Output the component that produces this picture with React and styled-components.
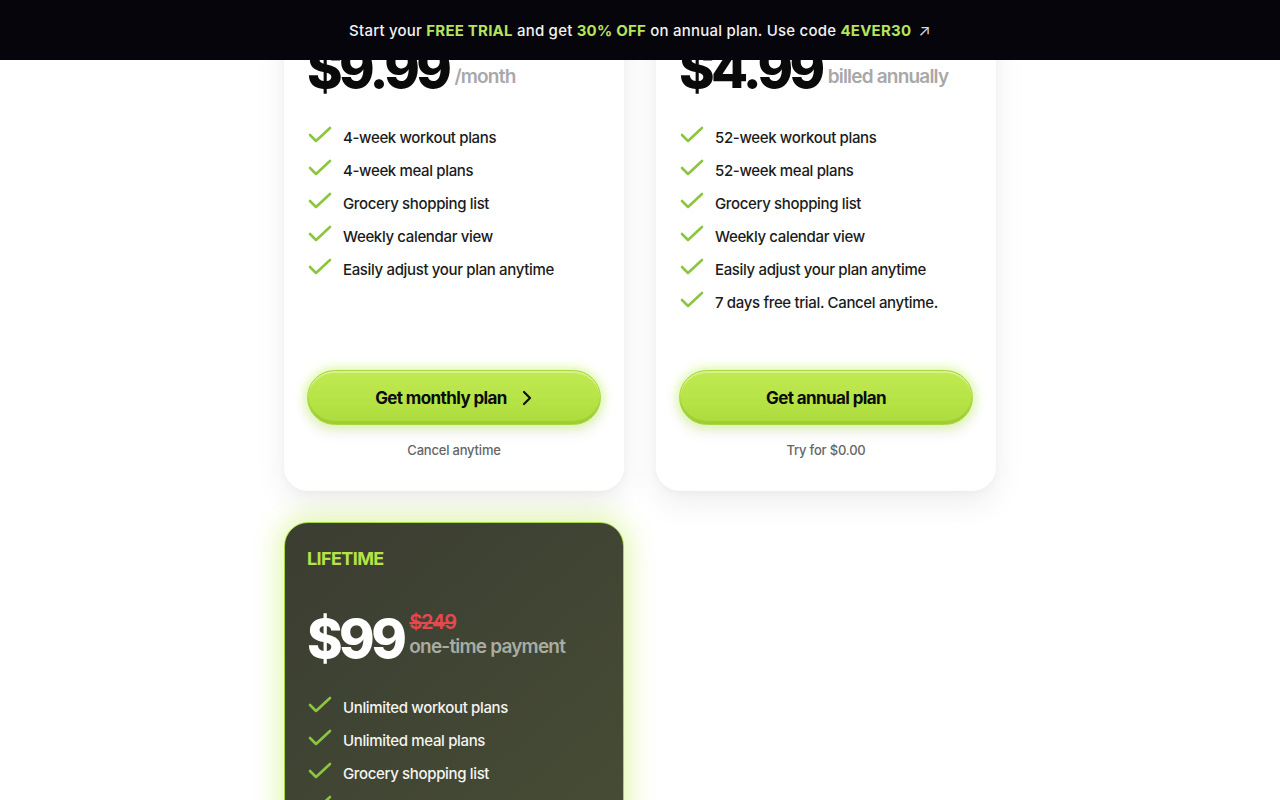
import styled, { createGlobalStyle } from "styled-components"

const GlobalStyle = createGlobalStyle`
  body {
    margin: 0;
    background: #ffffff;
    font-family: "Inter", "Noto Sans", sans-serif;
    color: #111;
  }
`

const plans = [
  {
    label: "MONTHLY",
    price: "$9.99",
    unit: "/month",
    features: ["4-week workout plans", "4-week meal plans", "Grocery shopping list", "Weekly calendar view", "Easily adjust your plan anytime"],
    cta: "Get monthly plan",
    arrow: true,
    note: "Cancel anytime",
  },
  {
    label: "ANNUAL",
    price: "$4.99",
    unit: "billed annually",
    features: ["52-week workout plans", "52-week meal plans", "Grocery shopping list", "Weekly calendar view", "Easily adjust your plan anytime", "7 days free trial. Cancel anytime."],
    cta: "Get annual plan",
    note: "Try for $0.00",
  },
  {
    label: "LIFETIME",
    price: "$99",
    old: "$249",
    unit: "one-time payment",
    dark: true,
    features: ["Unlimited workout plans", "Unlimited meal plans", "Grocery shopping list", "Weekly calendar view", "Easily adjust your plan anytime", "Lifetime access. Pay once."],
    cta: "Get lifetime plan",
    note: "One-time payment",
  },
]

const Check = () => (
  <svg width="26" height="18" viewBox="0 0 26 18" fill="none">
    <polyline points="3,9 9,15 23,2" stroke="#8cc63f" strokeWidth="2.6" strokeLinecap="round" strokeLinejoin="round" />
  </svg>
)

const Chevron = () => (
  <svg width="12" height="16" viewBox="0 0 12 16" fill="none">
    <polyline points="3,2 9,8 3,14" stroke="#111" strokeWidth="2.2" strokeLinecap="round" strokeLinejoin="round" />
  </svg>
)

const App = () => {
  return (
    <>
      <GlobalStyle />
      <Banner>
        Start your <Hi>FREE TRIAL</Hi> and get <Hi>30% OFF</Hi> on annual plan. Use code <Hi>4EVER30</Hi>
        <Arrow>↗</Arrow>
      </Banner>
      <Page>
        <Grid>
          {plans.map((p) => (
            <Card key={p.label} $dark={p.dark}>
              <Label $dark={p.dark}>{p.label}</Label>
              <PriceRow>
                <Amount $dark={p.dark}>{p.price}</Amount>
                <Side>
                  {p.old && <Old>{p.old}</Old>}
                  <Unit $dark={p.dark}>{p.unit}</Unit>
                </Side>
              </PriceRow>
              <Features>
                {p.features.map((f) => (
                  <Feature key={f} $dark={p.dark}>
                    <Check />
                    <span>{f}</span>
                  </Feature>
                ))}
              </Features>
              <Cta>
                <Button>
                  {p.cta}
                  {p.arrow && <Chevron />}
                </Button>
                <Note $dark={p.dark}>{p.note}</Note>
              </Cta>
            </Card>
          ))}
        </Grid>
      </Page>
    </>
  )
}

const Banner = styled.div`
  position: fixed;
  top: 0;
  left: 0;
  right: 0;
  height: 60px;
  z-index: 10;
  background: #05050b;
  color: #f2f2f2;
  display: flex;
  align-items: center;
  justify-content: center;
  font-size: 15px;
  font-weight: 500;
  letter-spacing: 0.22px;
  white-space: pre;
`
const Hi = styled.span`
  color: #b8e35a;
  font-weight: 700;
`
const Arrow = styled.span`
  color: #d8d8d8;
  font-weight: 400;
  font-size: 16px;
  margin-left: 7px;
`
const Page = styled.main`
  margin-top: -48px;
  padding-bottom: 60px;
`
const Grid = styled.div`
  width: 712px;
  margin: 0 auto;
  display: grid;
  grid-template-columns: 1fr 1fr;
  gap: 31px 32px;
`
const Card = styled.div`
  display: flex;
  flex-direction: column;
  padding: 24px 22px 30px;
  border-radius: 24px;
  background: ${(p) => (p.$dark ? "linear-gradient(140deg, #3a3d31 0%, #454a35 60%, #4a5135 100%)" : "#fff")};
  border: 1px solid ${(p) => (p.$dark ? "#a8d640" : "transparent")};
  box-shadow: ${(p) =>
    p.$dark
      ? "0 0 26px 6px rgba(194, 240, 80, 0.45)"
      : "0 12px 32px rgba(0, 0, 0, 0.07), 0 2px 8px rgba(0, 0, 0, 0.03)"};
`
const Label = styled.div`
  font-size: 18px;
  line-height: 24px;
  font-weight: 700;
  letter-spacing: -0.6px;
  color: ${(p) => (p.$dark ? "#b8e346" : "#8cc63f")};
`
const PriceRow = styled.div`
  margin-top: 41px;
  height: 54px;
  display: flex;
  align-items: flex-end;
  gap: 6px;
`
const Amount = styled.div`
  font-size: 54px;
  line-height: 54px;
  font-weight: 800;
  letter-spacing: -3.6px;
  color: ${(p) => (p.$dark ? "#fff" : "#0a0a0a")};
`
const Side = styled.div`
  display: flex;
  flex-direction: column;
  padding-bottom: 7px;
`
const Old = styled.span`
  font-size: 20px;
  line-height: 26px;
  font-weight: 600;
  letter-spacing: -1.2px;
  color: #e5484d;
  text-decoration: line-through;
`
const Unit = styled.span`
  font-size: 19px;
  line-height: 24px;
  font-weight: 600;
  letter-spacing: -0.8px;
  color: ${(p) => (p.$dark ? "#a9aca0" : "#a8a8a8")};
`
const Features = styled.ul`
  list-style: none;
  margin: 25px 0 51px;
  padding: 0;
`
const Feature = styled.li`
  display: flex;
  align-items: center;
  gap: 10px;
  height: 33px;
  font-size: 15px;
  font-weight: 500;
  letter-spacing: -0.35px;
  color: ${(p) => (p.$dark ? "#f4f4f0" : "#1b1b1b")};
  svg {
    flex-shrink: 0;
    margin-top: -6px;
  }
`
const Cta = styled.div`
  margin-top: auto;
  display: flex;
  flex-direction: column;
  align-items: stretch;
  gap: 15px;
`
const Button = styled.button`
  height: 55px;
  border-radius: 999px;
  border: 1px solid #a9d63c;
  background: linear-gradient(180deg, #c0ea52 0%, #b5e345 60%, #acd93c 100%);
  box-shadow: 0 0 10px 3px rgba(200, 245, 110, 0.55), 0 8px 16px rgba(0, 0, 0, 0.06), inset 0 2px 0 rgba(255, 255, 255, 0.35), inset 0 -3px 0 rgba(140, 190, 40, 0.45);
  display: flex;
  align-items: center;
  justify-content: center;
  gap: 14px;
  font-family: "Inter", sans-serif;
  font-size: 17px;
  font-weight: 700;
  letter-spacing: -0.6px;
  color: #0c0c0c;
  cursor: pointer;
`
const Note = styled.div`
  text-align: center;
  font-size: 13px;
  line-height: 20px;
  font-weight: 500;
  letter-spacing: -0.2px;
  color: ${(p) => (p.$dark ? "#bbb" : "#666")};
`

export default App
